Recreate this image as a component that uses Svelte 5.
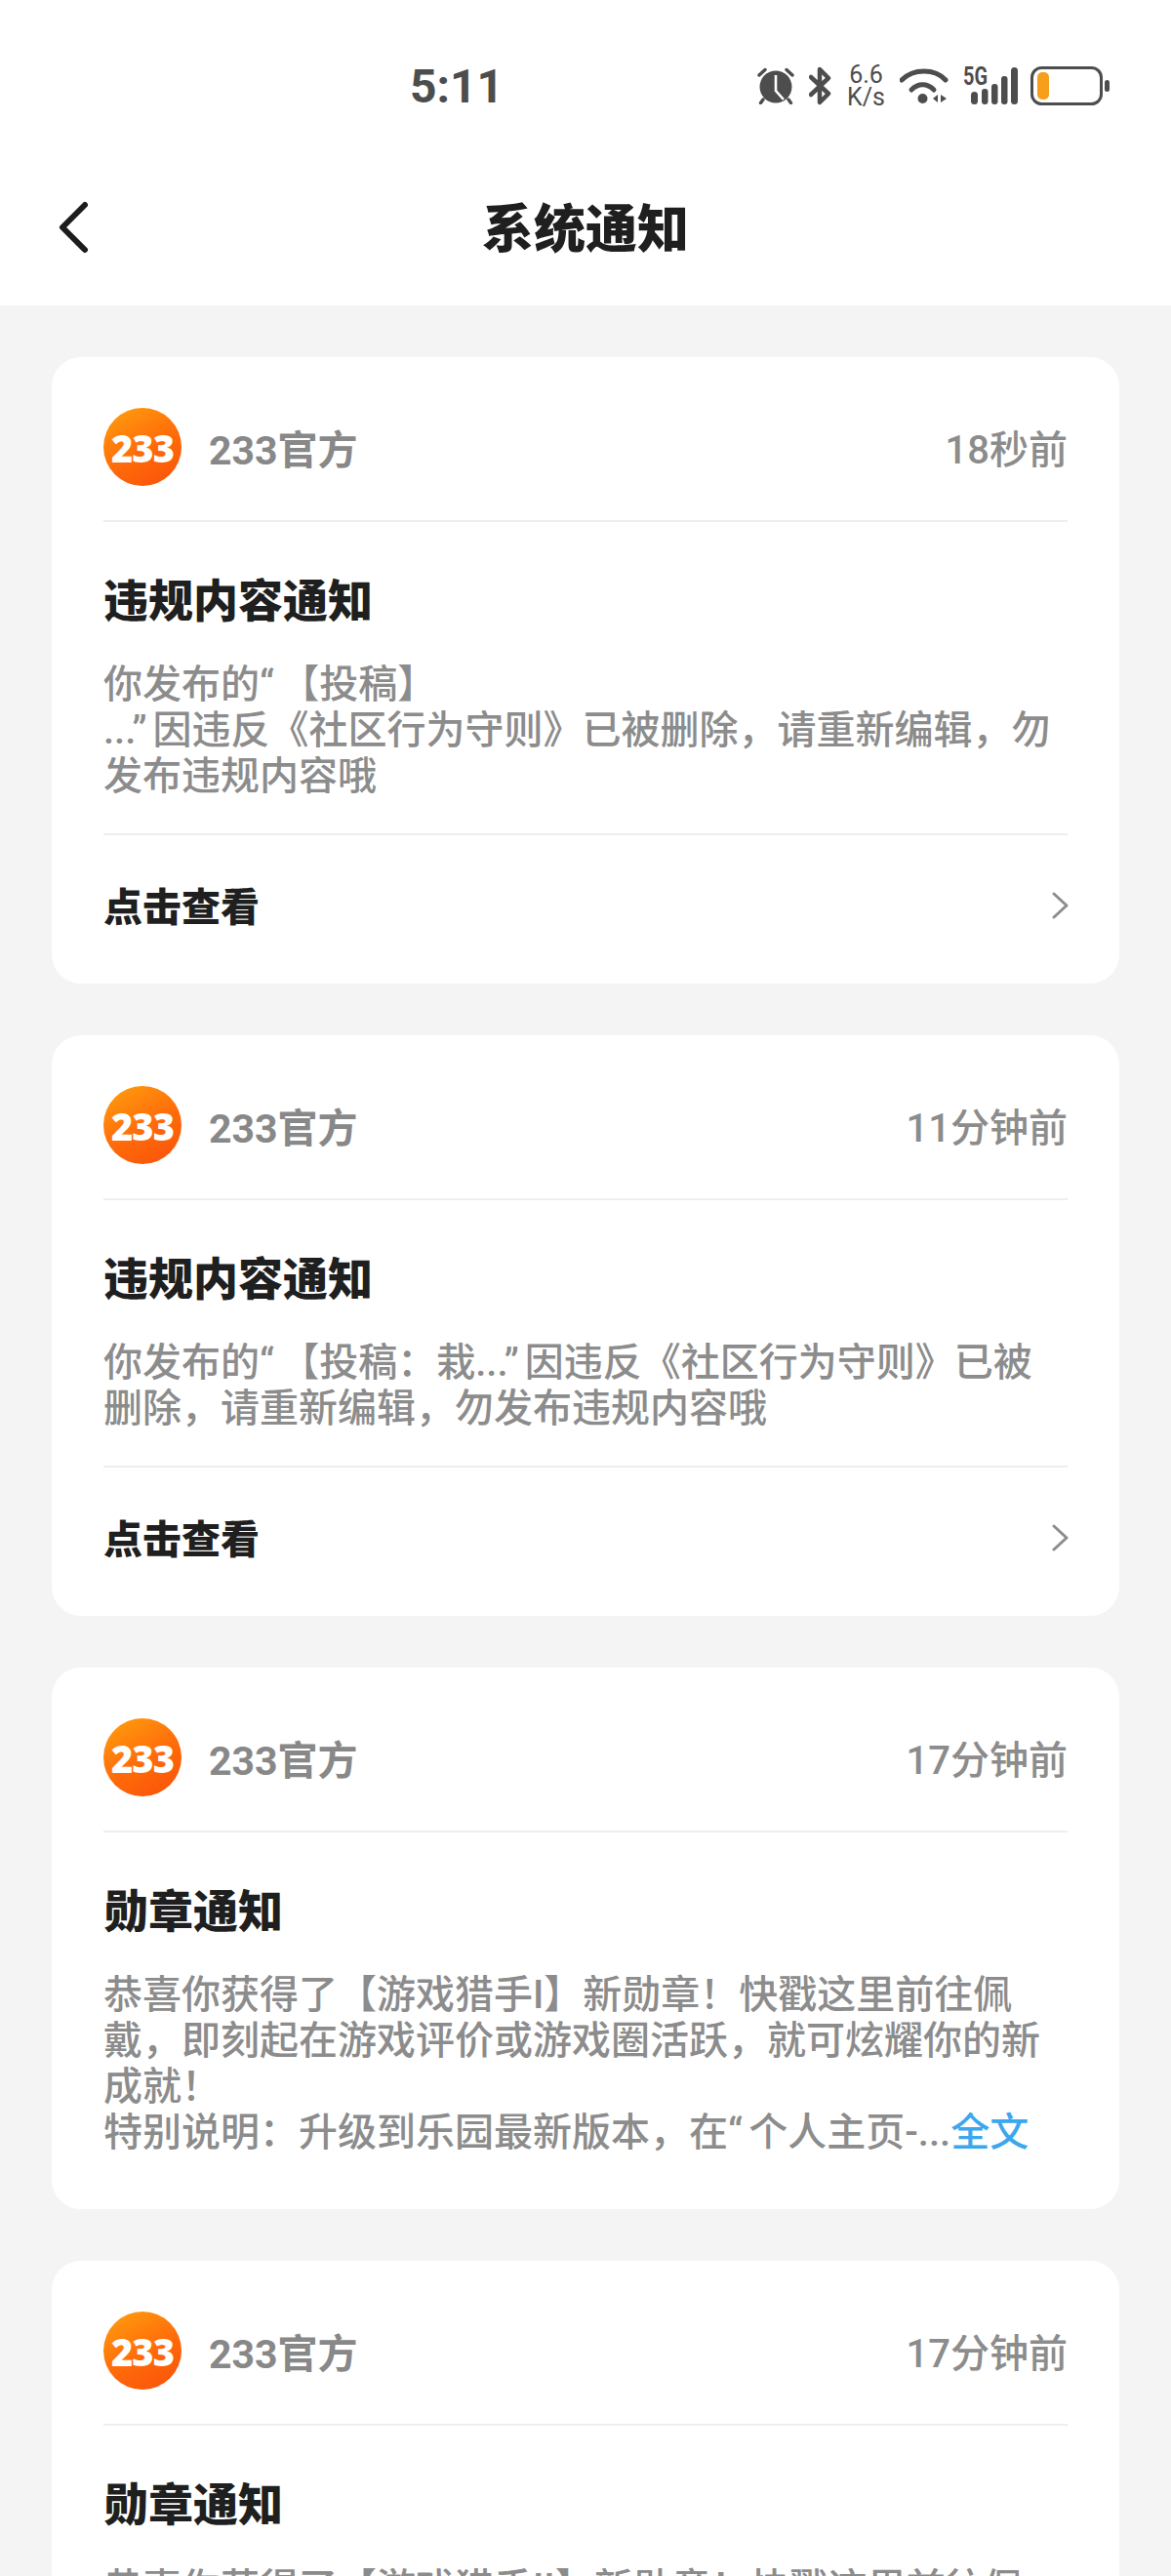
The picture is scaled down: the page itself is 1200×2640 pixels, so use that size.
<script>
  const rule = '《社区行为守则》';
  const notices = [
    {
      time: '18秒前',
      title: '违规内容通知',
      lines: ['你发布的“【投稿】', `...”因违反${rule}已被删除，请重新编辑，勿发布违规内容哦`],
      link: true
    },
    {
      time: '11分钟前',
      title: '违规内容通知',
      lines: [`你发布的“【投稿：栽...”因违反${rule}已被删除，请重新编辑，勿发布违规内容哦`],
      link: true
    },
    {
      time: '17分钟前',
      title: '勋章通知',
      lines: ['恭喜你获得了【游戏猎手I】新勋章！快戳这里前往佩戴，即刻起在游戏评价或游戏圈活跃，就可炫耀你的新成就！', '特别说明：升级到乐园最新版本，在“个人主页-...'],
      more: true
    },
    {
      time: '17分钟前',
      title: '勋章通知',
      lines: ['恭喜你获得了【游戏猎手II】新勋章！快戳这里前往佩戴，即刻起在游戏评价或游戏圈活跃，就可炫耀你的新成就！'],
      more: false
    }
  ];
</script>

<div class="page">
  <header class="top">
    <div class="status">
      <span class="clock">5:11</span>
      <div class="icons">
        <svg class="alarm" width="38" height="38" viewBox="0 0 38 38">
          <circle cx="19" cy="20" r="16.500" fill="#4d4d4d" />
          <path d="M19 8v16l8 9" fill="none" stroke="#fff" stroke-width="2.600" />
          <path d="M2 8 8 2.500M36 8 30 2.500M6 33l-2.500 3.500M32 33l2.500 3.500" stroke="#4d4d4d" stroke-width="3.400" stroke-linecap="round" />
        </svg>
        <svg class="bt" width="24" height="40" viewBox="0 0 24 40">
          <path d="M2 11 20 28 11 37V3l9 9L2 29" fill="none" stroke="#4d4d4d" stroke-width="4.500" stroke-linejoin="round" stroke-linecap="round" />
        </svg>
        <div class="speed"><span>6.6</span><span>K/s</span></div>
        <svg class="wifi" width="50" height="38" viewBox="0 0 50 38">
          <path d="M2 13C14 1 36 1 47 13" fill="none" stroke="#4d4d4d" stroke-width="5" stroke-linecap="round" />
          <path d="M12 23C19 16 28 16 35 23" fill="none" stroke="#4d4d4d" stroke-width="5" stroke-linecap="round" />
          <circle cx="23.500" cy="32" r="5" fill="#4d4d4d" />
          <path d="M34 32l5-4v8zM42 28l6 4-6 4z" fill="#4d4d4d" />
        </svg>
        <svg class="signal" width="56" height="38" viewBox="0 0 56 38">
          <text x="0" y="18" class="five" textLength="25" lengthAdjust="spacingAndGlyphs">5G</text>
          <rect x="8" y="25" width="7" height="13" rx="3.500" fill="#4d4d4d" />
          <rect x="19" y="22" width="6.500" height="16" rx="3" fill="#4d4d4d" />
          <rect x="29" y="17" width="6.500" height="21" rx="3" fill="#4d4d4d" />
          <rect x="39" y="9" width="6.500" height="29" rx="3" fill="#4d4d4d" />
          <rect x="49" y="0" width="7" height="38" rx="3.500" fill="#4d4d4d" />
        </svg>
        <svg class="battery" width="81" height="40" viewBox="0 0 81 40">
          <rect x="1.500" y="1.500" width="71" height="37" rx="10" fill="none" stroke="#4d4d4d" stroke-width="3" />
          <rect x="7" y="6" width="12" height="28" rx="5" fill="#f79f1c" />
          <rect x="76" y="14" width="5" height="12" rx="2.500" fill="#4d4d4d" />
        </svg>
      </div>
    </div>
    <div class="nav">
      <svg class="back" width="32" height="56" viewBox="0 0 32 56">
        <path d="M27 5 4 28l23 23" fill="none" stroke="#1c1c1c" stroke-width="6" stroke-linecap="round" stroke-linejoin="round" />
      </svg>
      <h1>系统通知</h1>
    </div>
  </header>

  <main class="list">
    {#each notices as n}
      <section class="card">
        <div class="card-head">
          <div class="avatar"><span>233</span></div>
          <span class="name">233官方</span>
          <span class="time">{n.time}</span>
        </div>
        <h2>{n.title}</h2>
        <div class="body">
          {#each n.lines as line}
            <p>{#each line.split(/([“”])/) as part}{#if part === '“' || part === '”'}<span class="quote">{part}</span>{:else}{part}{/if}{/each}{#if n.more && line.endsWith('...')}<span class="more">全文</span>{/if}</p>
          {/each}
        </div>
        {#if n.link}
          <div class="foot">
            <span>点击查看</span>
            <svg class="chev" width="17" height="30" viewBox="0 0 17 30">
              <path d="M2 3l13 12L2 27" fill="none" stroke="#8c8c8c" stroke-width="3" stroke-linecap="round" stroke-linejoin="round" />
            </svg>
          </div>
        {/if}
      </section>
    {/each}
  </main>
</div>

<style>
  :global(body) {
    margin: 0;
    background: #f4f4f4;
  }
  .page {
    height: 2640px;
    overflow: hidden;
    background: #f4f4f4;
    font-family: Roboto, "Noto Sans CJK SC", sans-serif;
    text-spacing-trim: space-all;
  }
  .top {
    height: 313px;
    background: #fff;
  }
  .status {
    height: 176px;
    display: flex;
    align-items: center;
    padding-left: 420px;
    padding-right: 63px;
    box-sizing: border-box;
  }
  .clock {
    font-size: 48px;
    font-weight: 700;
    color: #4d4d4d;
  }
  .icons {
    margin-left: auto;
    display: flex;
    align-items: center;
    gap: 15px;
  }
  .signal {
    overflow: visible;
  }
  .battery {
    margin-left: -2px;
  }
  .speed {
    display: flex;
    flex-direction: column;
    align-items: center;
    font-size: 25px;
    line-height: 23px;
    color: #4d4d4d;
  }
  .five {
    font-family: Roboto, sans-serif;
    font-size: 25px;
    font-weight: 700;
    fill: #4d4d4d;
  }
  .nav {
    position: relative;
    height: 118px;
    display: flex;
    align-items: center;
    justify-content: center;
    margin-top: -4px;
  }
  .back {
    position: absolute;
    left: 60px;
    top: 33px;
  }
  h1 {
    margin: 0;
    font-size: 53px;
    font-weight: 900;
    color: #1f1f1f;
  }
  .list {
    padding: 53px 53px 0;
    display: flex;
    flex-direction: column;
    gap: 53px;
  }
  .card {
    background: #fff;
    border-radius: 30px;
    padding: 52px 53px 55px;
  }
  .card-head {
    display: flex;
    align-items: center;
    padding-bottom: 35px;
    border-bottom: 2px solid #eeeeee;
  }
  .avatar {
    width: 80px;
    height: 80px;
    border-radius: 50%;
    background: linear-gradient(150deg, #ff9c0e 5%, #ff6a0a 55%, #f9500a 100%);
    display: flex;
    align-items: center;
    justify-content: center;
  }
  .avatar span {
    padding-top: 2px;
    color: #fff;
    font-family: "Open Sans", sans-serif;
    font-size: 38px;
    font-weight: 800;
    letter-spacing: -1px;
    line-height: 1;
  }
  .name {
    margin-left: 28px;
    font-size: 41px;
    font-weight: 700;
    color: #888888;
  }
  .time {
    margin-left: auto;
    font-size: 40px;
    font-weight: 500;
    color: #8c8c8c;
  }
  h2 {
    margin: 51px 0 0;
    font-size: 46px;
    line-height: 60px;
    font-weight: 900;
    color: #1f1f1f;
  }
  .body {
    margin-top: 32px;
    font-size: 40px;
    line-height: 47px;
    font-weight: 500;
    color: #8c8c8c;
  }
  .body p {
    margin: 0;
  }
  .quote {
    padding-right: 6px;
  }
  .more {
    color: #3ba7ee;
  }
  .foot {
    margin-top: 35px;
    margin-bottom: -1px;
    padding-top: 51px;
    border-top: 2px solid #eeeeee;
    display: flex;
    align-items: center;
    justify-content: space-between;
    font-size: 40px;
    line-height: 47px;
    font-weight: 900;
    color: #1f1f1f;
  }
  .chev {
    margin-top: -6px;
    margin-right: -1px;
  }
</style>
